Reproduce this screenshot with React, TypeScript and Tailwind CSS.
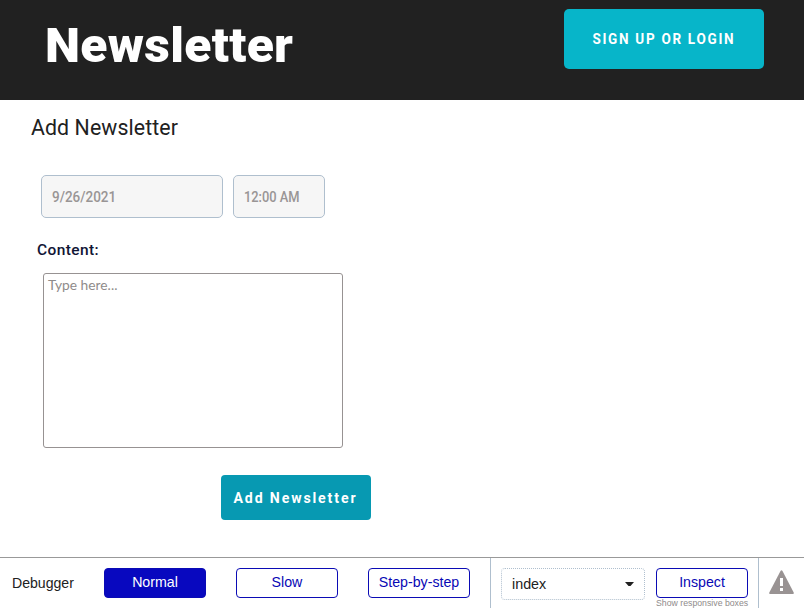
import type { ReactNode } from "react";

function ModeButton({ children, active = false }: { children: ReactNode; active?: boolean }) {
  return (
    <button
      className={`h-[30px] w-[102px] shrink-0 rounded border border-[#0b0bb5] pb-[2px] text-[14.2px] leading-none ${
        active ? "bg-[#0808bf] text-white" : "bg-white text-[#0808b5]"
      }`}
    >
      {children}
    </button>
  );
}

function Header() {
  return (
    <header className="flex h-[100px] items-start justify-between bg-[#212121] pl-[45px] pr-10 text-white">
      <h1 className="mt-[17px] origin-left scale-x-[1.018] whitespace-nowrap text-[49px] font-black leading-[58px] tracking-[0.3px]">Newsletter</h1>
      <button className="mt-[9px] h-[60px] w-[200px] rounded-[5px] bg-[#07b5c9] text-[15px] font-bold tracking-[1.9px]">
        <span className="inline-block -translate-x-[0.5px] scale-x-90 whitespace-nowrap">SIGN UP OR LOGIN</span>
      </button>
    </header>
  );
}

function NewsletterForm() {
  return (
    <main className="flex h-[457px] flex-col items-start">
      <h2 className="ml-[31px] mt-[13px] origin-left scale-x-[0.947] whitespace-nowrap text-[22.5px] leading-7 tracking-[0.1px] text-[#212121]">Add Newsletter</h2>
      <div className="ml-[41px] mt-[34px] flex gap-[10px] text-[15.5px] font-medium text-[#999595]">
        <div className="flex h-[43px] w-[182px] items-center rounded-[5px] border border-[#afbfce] bg-[#f6f6f6] pl-[10px] pt-[3px]">
          <span className="origin-left scale-x-[0.87]">9/26/2021</span>
        </div>
        <div className="flex h-[43px] w-[92px] items-center whitespace-nowrap rounded-[5px] border border-[#afbfce] bg-[#f6f6f6] pl-[10px] pt-[3px]">
          <span className="origin-left scale-x-[0.83]">12:00 AM</span>
        </div>
      </div>
      <label htmlFor="content" className="ml-[37px] mt-[22px] text-[15.5px] font-medium leading-5 tracking-[0.4px] text-[#101535]">
        Content:
      </label>
      <textarea
        id="content"
        placeholder="Type here..."
        className="ml-[43px] mt-[13px] h-[175px] w-[300px] resize-none rounded-[3px] border border-[#979292] px-1 py-[2px] font-[Lato,sans-serif] text-[13.8px] leading-[18px] outline-none placeholder:text-[#8f8b8b]"
      />
      <button className="ml-[221px] mt-[27px] h-[45px] w-[150px] rounded bg-[#0799b2] pt-px text-[15px] font-bold tracking-[2px] text-white">
        <span className="inline-block -translate-x-[0.5px] scale-x-[0.94] whitespace-nowrap">Add Newsletter</span>
      </button>
    </main>
  );
}

function Debugger() {
  return (
    <footer className="flex h-[51px] border-t border-[#999] bg-white font-['Liberation_Sans',Arial,sans-serif] text-[#212121]">
      <div className="flex w-[490px] items-start pl-3 pt-[10px]">
        <span className="w-[92px] pt-[7px] text-[14.1px] leading-4">Debugger</span>
        <div className="flex gap-[30px]">
          <ModeButton active>Normal</ModeButton>
          <ModeButton>Slow</ModeButton>
          <ModeButton>Step-by-step</ModeButton>
        </div>
      </div>
      <div className="flex w-[268px] items-start border-l border-[#afbfce] pl-[10px] pt-[10px]">
        <div className="flex h-8 w-36 items-center justify-between rounded-sm border border-dotted border-[#afbfce] pl-[10px] pr-[10px] text-[14.3px]">
          <span className="pt-px">index</span>
          <svg width="9" height="5" viewBox="0 0 9 5" fill="#212121"><path d="M0 0h9L5.5 4h-2z" /></svg>
        </div>
        <div className="ml-[11px] w-[92px]">
          <button className="block h-[30px] w-[92px] rounded border border-[#0b0bb5] pb-[2px] text-[14.2px] leading-none text-[#0808b5]">Inspect</button>
          <div className="origin-left scale-x-[0.97] whitespace-nowrap text-[9px] leading-[10px] text-[#8f8b8b]">Show responsive boxes</div>
        </div>
      </div>
      <div className="flex flex-1 items-start border-l border-[#afbfce] pl-[10px] pt-3">
        <svg width="25" height="25" viewBox="0 0 25 25" aria-label="Issues">
          <path d="M11.5 1q1-1.5 2 0L24.7 22.5q.7 1.5-1 1.5H1.3Q-.4 24 .3 22.5Z" fill="#999393" />
          <path d="M11 8h3v8h-3zM11 18h3v3h-3z" fill="#fff" />
        </svg>
      </div>
    </footer>
  );
}

export default function App() {
  return (
    <div className="h-[608px] w-[804px] overflow-hidden bg-white font-[Roboto,sans-serif]">
      <Header />
      <NewsletterForm />
      <Debugger />
    </div>
  );
}
